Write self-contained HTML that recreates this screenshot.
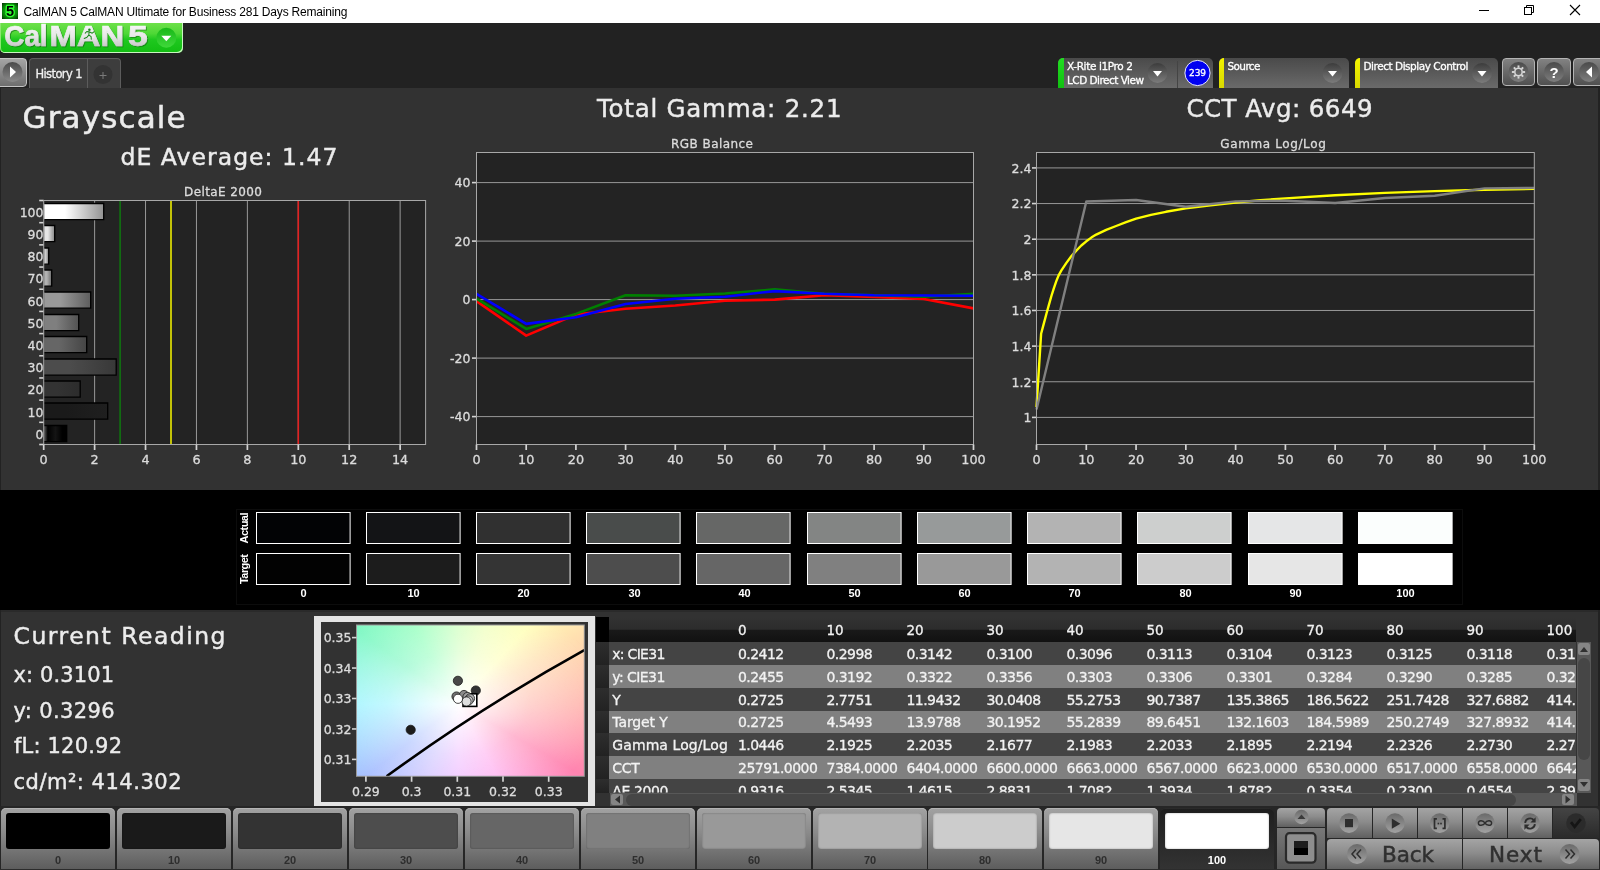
<!DOCTYPE html>
<html><head><meta charset="utf-8"><title>CalMAN 5</title>
<style>
html,body{margin:0;padding:0;}
body{width:1600px;height:870px;overflow:hidden;background:#222222;position:relative;}
.a{position:absolute;}
svg{position:absolute;left:0;top:0;will-change:transform;}
svg text{font-family:"DejaVu Sans","Liberation Sans",sans-serif;white-space:pre;}
</style></head><body>
<div class="a" style="left:0px;top:0px;width:1600px;height:23px;background:#ffffff;"></div>
<div class="a" style="left:0px;top:23px;width:183px;height:30px;background:linear-gradient(#6ee04a 0%,#4ed836 35%,#1fc81f 55%,#12bd12 100%);border-radius:0 0 5px 5px;box-shadow:inset -1px -1px 0 #c9f5c0, inset 1px 0 0 #8be870;box-sizing:border-box;"></div>
<div class="a" style="left:-2px;top:58px;width:27px;height:27px;background:linear-gradient(#a4a4a4,#6e6e6e);border:1px solid #c4c4c4;border-radius:0 4px 4px 0;"></div>
<div class="a" style="left:29px;top:58px;width:90px;height:31px;background:#3d3d3d;border:1px solid #5c5c5c;border-bottom:none;border-radius:4px 4px 0 0;"></div>
<div class="a" style="left:1058px;top:58px;width:155px;height:30px;background:linear-gradient(#4a4a4a 0%,#585858 45%,#6a6a6a 100%);border-radius:5px 5px 0 0;"></div>
<div class="a" style="left:1058px;top:58px;width:6px;height:30px;background:linear-gradient(#22dd22,#10c010);border-radius:5px 0 0 0;"></div>
<div class="a" style="left:1219px;top:58px;width:130px;height:30px;background:linear-gradient(#4a4a4a 0%,#585858 45%,#6a6a6a 100%);border-radius:5px 5px 0 0;"></div>
<div class="a" style="left:1219px;top:58px;width:5px;height:30px;background:linear-gradient(#f4f400,#d8d800);border-radius:5px 0 0 0;"></div>
<div class="a" style="left:1355px;top:58px;width:143px;height:30px;background:linear-gradient(#4a4a4a 0%,#585858 45%,#6a6a6a 100%);border-radius:5px 5px 0 0;"></div>
<div class="a" style="left:1355px;top:58px;width:5px;height:30px;background:linear-gradient(#f4f400,#d8d800);border-radius:5px 0 0 0;"></div>
<div class="a" style="left:1501.5px;top:58px;width:33.5px;height:28px;background:linear-gradient(#828282,#505050);border:1px solid #b4b4b4;border-radius:4px;box-sizing:border-box;"></div>
<div class="a" style="left:1537px;top:58px;width:33.5px;height:28px;background:linear-gradient(#828282,#505050);border:1px solid #b4b4b4;border-radius:4px;box-sizing:border-box;"></div>
<div class="a" style="left:1573px;top:58px;width:33.5px;height:28px;background:linear-gradient(#828282,#505050);border:1px solid #b4b4b4;border-radius:4px;box-sizing:border-box;"></div>
<div class="a" style="left:1px;top:88px;width:1597px;height:402px;background:#323232;"></div>
<div class="a" style="left:0px;top:490px;width:1600px;height:120px;background:#000000;"></div>
<div class="a" style="left:235.5px;top:508.5px;width:1227px;height:96px;border:1px solid #0c0c0c;box-sizing:border-box;"></div>
<div class="a" style="left:1px;top:610px;width:1597px;height:197px;background:#323232;"></div>
<div class="a" style="left:1px;top:610px;width:1597px;height:2px;background:#2a2a2a;"></div>
<div class="a" style="left:314px;top:616px;width:281px;height:189.5px;background:#e4e4e4;"></div>
<div class="a" style="left:320.5px;top:622px;width:267.7px;height:179.5px;background:#323232;"></div>
<div class="a" style="left:356.5px;top:625px;width:227.79999999999995px;height:151.29999999999995px;overflow:hidden;background:radial-gradient(ellipse 148px 106px at 101.5px 79.0px,rgba(255,255,255,1) 0%,rgba(255,255,255,0.82) 16%,rgba(255,255,255,0.42) 48%,rgba(255,255,255,0) 100%),conic-gradient(from 0deg at 101.5px 79.0px,#d4ffc4 0deg,#f0ffc0 20deg,#ffffb8 42deg,#ffe0b0 60deg,#ffb4ac 90deg,#ff84b0 120deg,#ffb0f0 152deg,#f0c0ff 180deg,#d0c4ff 204deg,#a4bcff 232deg,#98f4ff 270deg,#80f8c4 306deg,#98ffc0 330deg,#c0ffc4 350deg,#d4ffc4 360deg);"></div>
<div class="a" style="left:596px;top:617px;width:980px;height:25.2px;background:linear-gradient(#323232 0%,#2c2c2c 49%,#191919 53%,#111111 100%);"></div>
<div class="a" style="left:596px;top:617px;width:13px;height:25.2px;background:#000000;"></div>
<div class="a" style="left:609px;top:642.2px;width:967px;height:22.8px;background:#444444;"></div>
<div class="a" style="left:596px;top:642.2px;width:13px;height:22.8px;background:linear-gradient(#2e2e2e,#222222);"></div>
<div class="a" style="left:609px;top:665.0px;width:967px;height:22.8px;background:#808080;"></div>
<div class="a" style="left:596px;top:665.0px;width:13px;height:22.8px;background:linear-gradient(#2e2e2e,#222222);"></div>
<div class="a" style="left:609px;top:687.8px;width:967px;height:22.8px;background:#444444;"></div>
<div class="a" style="left:596px;top:687.8px;width:13px;height:22.8px;background:linear-gradient(#2e2e2e,#222222);"></div>
<div class="a" style="left:609px;top:710.6px;width:967px;height:22.8px;background:#808080;"></div>
<div class="a" style="left:596px;top:710.6px;width:13px;height:22.8px;background:linear-gradient(#2e2e2e,#222222);"></div>
<div class="a" style="left:609px;top:733.4px;width:967px;height:22.8px;background:#444444;"></div>
<div class="a" style="left:596px;top:733.4px;width:13px;height:22.8px;background:linear-gradient(#2e2e2e,#222222);"></div>
<div class="a" style="left:609px;top:756.2px;width:967px;height:22.8px;background:#808080;"></div>
<div class="a" style="left:596px;top:756.2px;width:13px;height:22.8px;background:linear-gradient(#2e2e2e,#222222);"></div>
<div class="a" style="left:609px;top:779.0px;width:967px;height:13.5px;background:#444444;"></div>
<div class="a" style="left:596px;top:779.0px;width:13px;height:13.5px;background:linear-gradient(#2e2e2e,#222222);"></div>
<div class="a" style="left:1577px;top:642px;width:14px;height:150.5px;background:#585858;"></div>
<div class="a" style="left:1578px;top:658px;width:12px;height:101.5px;background:#464646;border-radius:6px;"></div>
<div class="a" style="left:1578px;top:643px;width:12px;height:12px;background:#858585;border-radius:2px;"></div>
<div class="a" style="left:1578px;top:779px;width:12px;height:12px;background:#858585;border-radius:2px;"></div>
<div class="a" style="left:609.5px;top:792.5px;width:967px;height:14px;background:#585858;"></div>
<div class="a" style="left:626px;top:793.5px;width:889.5px;height:12px;background:#464646;border-radius:6px;"></div>
<div class="a" style="left:611px;top:794px;width:12px;height:11px;background:#858585;border-radius:2px;"></div>
<div class="a" style="left:1562px;top:794px;width:12px;height:11px;background:#858585;border-radius:2px;"></div>
<div class="a" style="left:0px;top:806px;width:1600px;height:64px;background:#262626;"></div>
<div class="a" style="left:1px;top:808px;width:114px;height:62px;background:linear-gradient(#a2a2a2 0%,#8a8a8a 40%,#5c5c5c 100%);border-radius:5px 5px 0 0;box-shadow:inset 0 1px 0 #b4b4b4;"></div>
<div class="a" style="left:6px;top:813px;width:104px;height:36px;background:#000000;border-radius:3px;box-shadow:inset 0 0 2px rgba(0,0,0,0.35);"></div>
<div class="a" style="left:117px;top:808px;width:114px;height:62px;background:linear-gradient(#a2a2a2 0%,#8a8a8a 40%,#5c5c5c 100%);border-radius:5px 5px 0 0;box-shadow:inset 0 1px 0 #b4b4b4;"></div>
<div class="a" style="left:122px;top:813px;width:104px;height:36px;background:#1a1a1a;border-radius:3px;box-shadow:inset 0 0 2px rgba(0,0,0,0.35);"></div>
<div class="a" style="left:233px;top:808px;width:114px;height:62px;background:linear-gradient(#a2a2a2 0%,#8a8a8a 40%,#5c5c5c 100%);border-radius:5px 5px 0 0;box-shadow:inset 0 1px 0 #b4b4b4;"></div>
<div class="a" style="left:238px;top:813px;width:104px;height:36px;background:#333333;border-radius:3px;box-shadow:inset 0 0 2px rgba(0,0,0,0.35);"></div>
<div class="a" style="left:349px;top:808px;width:114px;height:62px;background:linear-gradient(#a2a2a2 0%,#8a8a8a 40%,#5c5c5c 100%);border-radius:5px 5px 0 0;box-shadow:inset 0 1px 0 #b4b4b4;"></div>
<div class="a" style="left:354px;top:813px;width:104px;height:36px;background:#4d4d4d;border-radius:3px;box-shadow:inset 0 0 2px rgba(0,0,0,0.35);"></div>
<div class="a" style="left:465px;top:808px;width:114px;height:62px;background:linear-gradient(#a2a2a2 0%,#8a8a8a 40%,#5c5c5c 100%);border-radius:5px 5px 0 0;box-shadow:inset 0 1px 0 #b4b4b4;"></div>
<div class="a" style="left:470px;top:813px;width:104px;height:36px;background:#666666;border-radius:3px;box-shadow:inset 0 0 2px rgba(0,0,0,0.35);"></div>
<div class="a" style="left:581px;top:808px;width:114px;height:62px;background:linear-gradient(#a2a2a2 0%,#8a8a8a 40%,#5c5c5c 100%);border-radius:5px 5px 0 0;box-shadow:inset 0 1px 0 #b4b4b4;"></div>
<div class="a" style="left:586px;top:813px;width:104px;height:36px;background:#808080;border-radius:3px;box-shadow:inset 0 0 2px rgba(0,0,0,0.35);"></div>
<div class="a" style="left:697px;top:808px;width:114px;height:62px;background:linear-gradient(#a2a2a2 0%,#8a8a8a 40%,#5c5c5c 100%);border-radius:5px 5px 0 0;box-shadow:inset 0 1px 0 #b4b4b4;"></div>
<div class="a" style="left:702px;top:813px;width:104px;height:36px;background:#999999;border-radius:3px;box-shadow:inset 0 0 2px rgba(0,0,0,0.35);"></div>
<div class="a" style="left:813px;top:808px;width:114px;height:62px;background:linear-gradient(#a2a2a2 0%,#8a8a8a 40%,#5c5c5c 100%);border-radius:5px 5px 0 0;box-shadow:inset 0 1px 0 #b4b4b4;"></div>
<div class="a" style="left:818px;top:813px;width:104px;height:36px;background:#b3b3b3;border-radius:3px;box-shadow:inset 0 0 2px rgba(0,0,0,0.35);"></div>
<div class="a" style="left:928px;top:808px;width:114px;height:62px;background:linear-gradient(#a2a2a2 0%,#8a8a8a 40%,#5c5c5c 100%);border-radius:5px 5px 0 0;box-shadow:inset 0 1px 0 #b4b4b4;"></div>
<div class="a" style="left:933px;top:813px;width:104px;height:36px;background:#cccccc;border-radius:3px;box-shadow:inset 0 0 2px rgba(0,0,0,0.35);"></div>
<div class="a" style="left:1044px;top:808px;width:114px;height:62px;background:linear-gradient(#a2a2a2 0%,#8a8a8a 40%,#5c5c5c 100%);border-radius:5px 5px 0 0;box-shadow:inset 0 1px 0 #b4b4b4;"></div>
<div class="a" style="left:1049px;top:813px;width:104px;height:36px;background:#e6e6e6;border-radius:3px;box-shadow:inset 0 0 2px rgba(0,0,0,0.35);"></div>
<div class="a" style="left:1160px;top:808px;width:114px;height:62px;background:linear-gradient(#1e1e1e,#333333);border-radius:5px 5px 0 0;box-shadow:inset 0 1px 0 #2a2a2a;"></div>
<div class="a" style="left:1165px;top:813px;width:104px;height:36px;background:#ffffff;border-radius:3px;box-shadow:inset 0 0 2px rgba(0,0,0,0.35);"></div>
<div class="a" style="left:1277px;top:808px;width:48px;height:18.5px;background:linear-gradient(#a4a4a4 0%,#8c8c8c 45%,#606060 100%);border-radius:4px 4px 0 0;"></div>
<div class="a" style="left:1277px;top:827.5px;width:48px;height:42.5px;background:linear-gradient(#787878,#565656);"></div>
<div class="a" style="left:1327px;top:808px;width:44.5px;height:30px;background:linear-gradient(#a4a4a4 0%,#8c8c8c 45%,#606060 100%);border-radius:4px 0 0 0;"></div>
<div class="a" style="left:1372.5px;top:808px;width:44.0px;height:30px;background:linear-gradient(#a4a4a4 0%,#8c8c8c 45%,#606060 100%);"></div>
<div class="a" style="left:1417.5px;top:808px;width:44.0px;height:30px;background:linear-gradient(#a4a4a4 0%,#8c8c8c 45%,#606060 100%);"></div>
<div class="a" style="left:1462.5px;top:808px;width:44.0px;height:30px;background:linear-gradient(#a4a4a4 0%,#8c8c8c 45%,#606060 100%);"></div>
<div class="a" style="left:1507.5px;top:808px;width:44.0px;height:30px;background:linear-gradient(#a4a4a4 0%,#8c8c8c 45%,#606060 100%);"></div>
<div class="a" style="left:1552.5px;top:808px;width:46.2px;height:30px;background:linear-gradient(#444444,#2a2a2a);border-radius:0 4px 0 0;"></div>
<div class="a" style="left:1327px;top:839px;width:135px;height:31px;background:linear-gradient(#a4a4a4 0%,#8c8c8c 45%,#606060 100%);border-radius:4px 0 0 0;"></div>
<div class="a" style="left:1463px;top:839px;width:135.5px;height:31px;background:linear-gradient(#a4a4a4 0%,#8c8c8c 45%,#606060 100%);border-radius:0 4px 0 0;"></div>
<div class="a" style="left:0px;top:869px;width:1600px;height:1px;background:#2c2c2c;"></div>
<svg width="1600" height="870" viewBox="0 0 1600 870">
<defs><radialGradient id="icg" cx="50%" cy="50%" r="72%"><stop offset="0" stop-color="#18c818"/><stop offset="0.6" stop-color="#0a8a0a"/><stop offset="1" stop-color="#032803"/></radialGradient></defs>
<rect x="2" y="3" width="16" height="16" fill="url(#icg)"/>
<text x="10.0" y="16.1" font-size="14.5" fill="#000000" text-anchor="middle" font-weight="bold" style="font-family:Liberation Sans, sans-serif" stroke="#30ff30" stroke-width="2.6" stroke-linejoin="round" paint-order="stroke">5</text>
<text x="23.5" y="16.0" font-size="12" fill="#000000" style="font-family:Liberation Sans, sans-serif" textLength="324.0" lengthAdjust="spacing">CalMAN 5 CalMAN Ultimate for Business 281 Days Remaining</text>
<line x1="1479" y1="10.5" x2="1489" y2="10.5" stroke="#000" stroke-width="1"/>
<rect x="1524.5" y="7.5" width="7" height="7" fill="none" stroke="#000" stroke-width="1"/>
<path d="M1526.5 7.5V5.5H1533.5V12.5H1531.5" fill="none" stroke="#000" stroke-width="1"/>
<path d="M1570 5L1580 15M1580 5L1570 15" fill="none" stroke="#000" stroke-width="1.1"/>
<defs><linearGradient id="lg" x1="0" y1="0" x2="0" y2="1"><stop offset="0" stop-color="#ffffff"/><stop offset="0.55" stop-color="#e6e6e6"/><stop offset="1" stop-color="#b8b8b8"/></linearGradient></defs>
<defs><filter id="ls" x="-5%" y="-10%" width="112%" height="130%"><feDropShadow dx="1" dy="1" stdDeviation="0.35" flood-color="#167016" flood-opacity="0.65"/></filter></defs>
<text y="45.7" font-size="29.3" font-weight="bold" fill="url(#lg)" style="font-family:Liberation Sans, sans-serif" stroke="url(#lg)" stroke-width="0.7" filter="url(#ls)"><tspan x="4.3" textLength="43.3" lengthAdjust="spacingAndGlyphs">Cal</tspan><tspan x="49.6" textLength="74.5" lengthAdjust="spacingAndGlyphs">MAN</tspan><tspan x="128" textLength="19.7" lengthAdjust="spacingAndGlyphs">5</tspan></text>
<path d="M89.6 28.5L85 38h9.2z" fill="#ececec"/>
<circle cx="89.4" cy="29.8" r="1.25" fill="#1d8a1d"/>
<path d="M85.2 33.2l1.6-1.7 2.4 0.3 3 1.4 1.7-1.4M89.1 31.8l-0.3 3.3-1.8 2.1-2.8 1.2M88.8 35l2.3 1.6 0.2 2.7" fill="none" stroke="#1d8a1d" stroke-width="1.05" stroke-linecap="round" stroke-linejoin="round"/>
<defs><linearGradient id="gcirc" x1="0" y1="0" x2="0" y2="1"><stop offset="0" stop-color="#18b818"/><stop offset="1" stop-color="#3fd83a"/></linearGradient></defs>
<circle cx="166.3" cy="37.7" r="10" fill="url(#gcirc)"/>
<path d="M161.3 35.7h10l-5 5.5z" fill="#ffffff"/>
<defs><linearGradient id="dcirc" x1="0" y1="0" x2="0" y2="1"><stop offset="0" stop-color="#4a4a4a"/><stop offset="1" stop-color="#8a8a8a"/></linearGradient></defs>
<circle cx="12.5" cy="72" r="10" fill="url(#dcirc)"/>
<path d="M10 66.5v11l6-5.5z" fill="#ffffff"/>
<line x1="87.5" y1="59" x2="87.5" y2="88" stroke="#5c5c5c" stroke-width="1"/>
<text x="35.5" y="78.0" font-size="11.5" fill="#f0f0f0" textLength="47.0" lengthAdjust="spacing" stroke="#f0f0f0" stroke-width="0.3">History 1</text>
<circle cx="103" cy="74.5" r="9.5" fill="#333333"/>
<path d="M99.5 75.5h7M103 72v7" stroke="#7a7a7a" stroke-width="1" fill="none"/>
<defs><linearGradient id="dcirc2" x1="0" y1="0" x2="0" y2="1"><stop offset="0" stop-color="#3c3c3c"/><stop offset="1" stop-color="#7c7c7c"/></linearGradient></defs>
<text x="1067.0" y="70.0" font-size="10.5" fill="#ffffff" textLength="66.0" lengthAdjust="spacing" stroke="#ffffff" stroke-width="0.3">X-Rite i1Pro 2</text>
<text x="1067.0" y="84.0" font-size="10.5" fill="#ffffff" textLength="77.0" lengthAdjust="spacing" stroke="#ffffff" stroke-width="0.3">LCD Direct View</text>
<circle cx="1157.5" cy="73" r="10" fill="url(#dcirc2)"/>
<path d="M1153.0 71h9l-4.5 5.5z" fill="#ffffff"/>
<line x1="1177.5" y1="61" x2="1177.5" y2="88" stroke="#444444" stroke-width="1"/>
<circle cx="1197.5" cy="73" r="12.6" fill="#0000f0" stroke="#e8e8ff" stroke-width="1"/>
<text x="1197.5" y="76.3" font-size="9" fill="#ffffff" text-anchor="middle" stroke="#ffffff" stroke-width="0.3">239</text>
<text x="1227.5" y="70.0" font-size="10.5" fill="#ffffff" textLength="33.0" lengthAdjust="spacing" stroke="#ffffff" stroke-width="0.3">Source</text>
<circle cx="1332.5" cy="73" r="10" fill="url(#dcirc2)"/>
<path d="M1328.0 71h9l-4.5 5.5z" fill="#ffffff"/>
<text x="1363.5" y="70.0" font-size="10.5" fill="#ffffff" textLength="105.0" lengthAdjust="spacing" stroke="#ffffff" stroke-width="0.3">Direct Display Control</text>
<circle cx="1482" cy="73" r="10" fill="url(#dcirc2)"/>
<path d="M1477.5 71h9l-4.5 5.5z" fill="#ffffff"/>
<circle cx="1518.5" cy="72" r="10" fill="url(#dcirc3)"/>
<circle cx="1554" cy="72" r="10" fill="url(#dcirc3)"/>
<circle cx="1589" cy="72" r="10" fill="url(#dcirc3)"/>
<defs><linearGradient id="dcirc3" x1="0" y1="0" x2="0" y2="1"><stop offset="0" stop-color="#4a4a4a"/><stop offset="1" stop-color="#7e7e7e"/></linearGradient></defs>
<line x1="1522.80" y1="72.00" x2="1525.10" y2="72.00" stroke="#d8d8d8" stroke-width="1.9"/><line x1="1521.54" y1="75.04" x2="1523.17" y2="76.67" stroke="#d8d8d8" stroke-width="1.9"/><line x1="1518.50" y1="76.30" x2="1518.50" y2="78.60" stroke="#d8d8d8" stroke-width="1.9"/><line x1="1515.46" y1="75.04" x2="1513.83" y2="76.67" stroke="#d8d8d8" stroke-width="1.9"/><line x1="1514.20" y1="72.00" x2="1511.90" y2="72.00" stroke="#d8d8d8" stroke-width="1.9"/><line x1="1515.46" y1="68.96" x2="1513.83" y2="67.33" stroke="#d8d8d8" stroke-width="1.9"/><line x1="1518.50" y1="67.70" x2="1518.50" y2="65.40" stroke="#d8d8d8" stroke-width="1.9"/><line x1="1521.54" y1="68.96" x2="1523.17" y2="67.33" stroke="#d8d8d8" stroke-width="1.9"/>
<circle cx="1518.5" cy="72" r="3.7" fill="none" stroke="#d8d8d8" stroke-width="1.5"/>
<text x="1554.0" y="77.5" font-size="15" fill="#ffffff" text-anchor="middle" font-weight="bold" style="font-family:Liberation Sans, sans-serif">?</text>
<path d="M1592 66.5v11l-6-5.5z" fill="#ffffff"/>
<text x="22.6" y="127.7" font-size="31" fill="#ececec" textLength="163.0" lengthAdjust="spacing" stroke="#ececec" stroke-width="0.55">Grayscale</text>
<text x="120.5" y="164.7" font-size="23.5" fill="#ececec" textLength="217.0" lengthAdjust="spacing" stroke="#ececec" stroke-width="0.45">dE Average: 1.47</text>
<text x="597.0" y="116.6" font-size="24.5" fill="#ececec" textLength="244.5" lengthAdjust="spacing" stroke="#ececec" stroke-width="0.45">Total Gamma: 2.21</text>
<text x="1186.5" y="116.6" font-size="24.5" fill="#ececec" textLength="186.0" lengthAdjust="spacing" stroke="#ececec" stroke-width="0.45">CCT Avg: 6649</text>
<text x="223.0" y="195.6" font-size="12" fill="#dcdcdc" text-anchor="middle" textLength="78.0" lengthAdjust="spacing" stroke="#dcdcdc" stroke-width="0.3">DeltaE 2000</text>
<rect x="43.7" y="200.5" width="381.90000000000003" height="244.0" fill="#232323"/>
<line x1="94.62" y1="200.5" x2="94.62" y2="444.5" stroke="#989898" stroke-width="1"/>
<line x1="145.54000000000002" y1="200.5" x2="145.54000000000002" y2="444.5" stroke="#989898" stroke-width="1"/>
<line x1="196.45999999999998" y1="200.5" x2="196.45999999999998" y2="444.5" stroke="#989898" stroke-width="1"/>
<line x1="247.38" y1="200.5" x2="247.38" y2="444.5" stroke="#989898" stroke-width="1"/>
<line x1="298.3" y1="200.5" x2="298.3" y2="444.5" stroke="#989898" stroke-width="1"/>
<line x1="349.21999999999997" y1="200.5" x2="349.21999999999997" y2="444.5" stroke="#989898" stroke-width="1"/>
<line x1="400.14" y1="200.5" x2="400.14" y2="444.5" stroke="#989898" stroke-width="1"/>
<line x1="120.08" y1="200.5" x2="120.08" y2="444.5" stroke="#0a8a0a" stroke-width="1.25"/>
<line x1="171.0" y1="200.5" x2="171.0" y2="444.5" stroke="#f8f800" stroke-width="1.5"/>
<line x1="298.3" y1="200.5" x2="298.3" y2="444.5" stroke="#e42020" stroke-width="1.6"/>
<rect x="44.2" y="425.5" width="22.5" height="16.2" fill="url(#bg0)"/>
<path d="M44.2 425.5H66.7V441.7H44.2" fill="none" stroke="#000000" stroke-width="1.3"/>
<line x1="39.2" y1="422.3181818181818" x2="43.7" y2="422.3181818181818" stroke="#d4d4d4" stroke-width="1.6"/>
<text x="43.5" y="438.7" font-size="12.5" fill="#dcdcdc" text-anchor="end" stroke="#dcdcdc" stroke-width="0.3">0</text>
<rect x="44.2" y="403.0" width="63.5" height="16.2" fill="url(#bg1)"/>
<path d="M44.2 403.0H107.7V419.2H44.2" fill="none" stroke="#000000" stroke-width="1.3"/>
<line x1="39.2" y1="400.1363636363636" x2="43.7" y2="400.1363636363636" stroke="#d4d4d4" stroke-width="1.6"/>
<text x="43.5" y="416.5" font-size="12.5" fill="#dcdcdc" text-anchor="end" stroke="#dcdcdc" stroke-width="0.3">10</text>
<rect x="44.2" y="381.0" width="36.0" height="16.2" fill="url(#bg2)"/>
<path d="M44.2 381.0H80.2V397.2H44.2" fill="none" stroke="#000000" stroke-width="1.3"/>
<line x1="39.2" y1="377.95454545454544" x2="43.7" y2="377.95454545454544" stroke="#d4d4d4" stroke-width="1.6"/>
<text x="43.5" y="394.3" font-size="12.5" fill="#dcdcdc" text-anchor="end" stroke="#dcdcdc" stroke-width="0.3">20</text>
<rect x="44.2" y="359.0" width="72.0" height="16.2" fill="url(#bg3)"/>
<path d="M44.2 359.0H116.2V375.2H44.2" fill="none" stroke="#000000" stroke-width="1.3"/>
<line x1="39.2" y1="355.77272727272725" x2="43.7" y2="355.77272727272725" stroke="#d4d4d4" stroke-width="1.6"/>
<text x="43.5" y="372.2" font-size="12.5" fill="#dcdcdc" text-anchor="end" stroke="#dcdcdc" stroke-width="0.3">30</text>
<rect x="44.2" y="336.5" width="42.5" height="16.2" fill="url(#bg4)"/>
<path d="M44.2 336.5H86.7V352.7H44.2" fill="none" stroke="#000000" stroke-width="1.3"/>
<line x1="39.2" y1="333.59090909090907" x2="43.7" y2="333.59090909090907" stroke="#d4d4d4" stroke-width="1.6"/>
<text x="43.5" y="350.0" font-size="12.5" fill="#dcdcdc" text-anchor="end" stroke="#dcdcdc" stroke-width="0.3">40</text>
<rect x="44.2" y="314.5" width="34.5" height="16.2" fill="url(#bg5)"/>
<path d="M44.2 314.5H78.7V330.7H44.2" fill="none" stroke="#000000" stroke-width="1.3"/>
<line x1="39.2" y1="311.4090909090909" x2="43.7" y2="311.4090909090909" stroke="#d4d4d4" stroke-width="1.6"/>
<text x="43.5" y="327.8" font-size="12.5" fill="#dcdcdc" text-anchor="end" stroke="#dcdcdc" stroke-width="0.3">50</text>
<rect x="44.2" y="292.0" width="46.5" height="16.2" fill="url(#bg6)"/>
<path d="M44.2 292.0H90.7V308.2H44.2" fill="none" stroke="#000000" stroke-width="1.3"/>
<line x1="39.2" y1="289.22727272727275" x2="43.7" y2="289.22727272727275" stroke="#d4d4d4" stroke-width="1.6"/>
<text x="43.5" y="305.6" font-size="12.5" fill="#dcdcdc" text-anchor="end" stroke="#dcdcdc" stroke-width="0.3">60</text>
<rect x="44.2" y="270.0" width="7.5" height="16.2" fill="url(#bg7)"/>
<path d="M44.2 270.0H51.7V286.2H44.2" fill="none" stroke="#000000" stroke-width="1.3"/>
<line x1="39.2" y1="267.0454545454545" x2="43.7" y2="267.0454545454545" stroke="#d4d4d4" stroke-width="1.6"/>
<text x="43.5" y="283.4" font-size="12.5" fill="#dcdcdc" text-anchor="end" stroke="#dcdcdc" stroke-width="0.3">70</text>
<rect x="44.2" y="248.0" width="4.5" height="16.2" fill="url(#bg8)"/>
<path d="M44.2 248.0H48.7V264.2H44.2" fill="none" stroke="#000000" stroke-width="1.3"/>
<line x1="39.2" y1="244.86363636363635" x2="43.7" y2="244.86363636363635" stroke="#d4d4d4" stroke-width="1.6"/>
<text x="43.5" y="261.3" font-size="12.5" fill="#dcdcdc" text-anchor="end" stroke="#dcdcdc" stroke-width="0.3">80</text>
<rect x="44.2" y="225.5" width="10.5" height="16.2" fill="url(#bg9)"/>
<path d="M44.2 225.5H54.7V241.7H44.2" fill="none" stroke="#000000" stroke-width="1.3"/>
<line x1="39.2" y1="222.68181818181816" x2="43.7" y2="222.68181818181816" stroke="#d4d4d4" stroke-width="1.6"/>
<text x="43.5" y="239.1" font-size="12.5" fill="#dcdcdc" text-anchor="end" stroke="#dcdcdc" stroke-width="0.3">90</text>
<rect x="44.2" y="203.5" width="59.5" height="16.2" fill="url(#bg10)"/>
<path d="M44.2 203.5H103.7V219.7H44.2" fill="none" stroke="#000000" stroke-width="1.3"/>
<line x1="39.2" y1="200.49999999999997" x2="43.7" y2="200.49999999999997" stroke="#d4d4d4" stroke-width="1.6"/>
<text x="43.5" y="216.9" font-size="12.5" fill="#dcdcdc" text-anchor="end" stroke="#dcdcdc" stroke-width="0.3">100</text>
<defs><linearGradient id="bg0" x1="0" y1="0" x2="1" y2="0"><stop offset="0" stop-color="#5a5a5a"/><stop offset="0.16" stop-color="#000000"/><stop offset="0.5" stop-color="#141414"/><stop offset="0.8" stop-color="#000000"/></linearGradient><linearGradient id="bg1" x1="0" y1="0" x2="1" y2="0"><stop offset="0" stop-color="#1a1a1a"/><stop offset="0.35" stop-color="#1a1a1a"/><stop offset="1" stop-color="#1f1f1f"/></linearGradient><linearGradient id="bg2" x1="0" y1="0" x2="1" y2="0"><stop offset="0" stop-color="#333333"/><stop offset="0.35" stop-color="#333333"/><stop offset="1" stop-color="#2c2c2c"/></linearGradient><linearGradient id="bg3" x1="0" y1="0" x2="1" y2="0"><stop offset="0" stop-color="#4c4c4c"/><stop offset="0.35" stop-color="#4c4c4c"/><stop offset="1" stop-color="#383838"/></linearGradient><linearGradient id="bg4" x1="0" y1="0" x2="1" y2="0"><stop offset="0" stop-color="#666666"/><stop offset="0.35" stop-color="#666666"/><stop offset="1" stop-color="#454545"/></linearGradient><linearGradient id="bg5" x1="0" y1="0" x2="1" y2="0"><stop offset="0" stop-color="#7f7f7f"/><stop offset="0.35" stop-color="#7f7f7f"/><stop offset="1" stop-color="#525252"/></linearGradient><linearGradient id="bg6" x1="0" y1="0" x2="1" y2="0"><stop offset="0" stop-color="#999999"/><stop offset="0.35" stop-color="#999999"/><stop offset="1" stop-color="#5e5e5e"/></linearGradient><linearGradient id="bg7" x1="0" y1="0" x2="1" y2="0"><stop offset="0" stop-color="#b2b2b2"/><stop offset="0.35" stop-color="#b2b2b2"/><stop offset="1" stop-color="#6b6b6b"/></linearGradient><linearGradient id="bg8" x1="0" y1="0" x2="1" y2="0"><stop offset="0" stop-color="#cccccc"/><stop offset="0.35" stop-color="#cccccc"/><stop offset="1" stop-color="#787878"/></linearGradient><linearGradient id="bg9" x1="0" y1="0" x2="1" y2="0"><stop offset="0" stop-color="#e5e5e5"/><stop offset="0.35" stop-color="#e5e5e5"/><stop offset="1" stop-color="#858585"/></linearGradient><linearGradient id="bg10" x1="0" y1="0" x2="1" y2="0"><stop offset="0" stop-color="#ffffff"/><stop offset="0.35" stop-color="#ffffff"/><stop offset="1" stop-color="#929292"/></linearGradient></defs>
<line x1="39.2" y1="444.5" x2="43.7" y2="444.5" stroke="#d4d4d4" stroke-width="1.6"/>
<rect x="43.7" y="200.5" width="381.90000000000003" height="244.0" fill="none" stroke="#a8a8a8" stroke-width="1"/>
<line x1="43.7" y1="444.5" x2="43.7" y2="450.0" stroke="#d4d4d4" stroke-width="1.7"/>
<text x="43.7" y="464.2" font-size="12.8" fill="#dcdcdc" text-anchor="middle" stroke="#dcdcdc" stroke-width="0.3">0</text>
<line x1="94.62" y1="444.5" x2="94.62" y2="450.0" stroke="#d4d4d4" stroke-width="1.7"/>
<text x="94.6" y="464.2" font-size="12.8" fill="#dcdcdc" text-anchor="middle" stroke="#dcdcdc" stroke-width="0.3">2</text>
<line x1="145.54000000000002" y1="444.5" x2="145.54000000000002" y2="450.0" stroke="#d4d4d4" stroke-width="1.7"/>
<text x="145.5" y="464.2" font-size="12.8" fill="#dcdcdc" text-anchor="middle" stroke="#dcdcdc" stroke-width="0.3">4</text>
<line x1="196.45999999999998" y1="444.5" x2="196.45999999999998" y2="450.0" stroke="#d4d4d4" stroke-width="1.7"/>
<text x="196.5" y="464.2" font-size="12.8" fill="#dcdcdc" text-anchor="middle" stroke="#dcdcdc" stroke-width="0.3">6</text>
<line x1="247.38" y1="444.5" x2="247.38" y2="450.0" stroke="#d4d4d4" stroke-width="1.7"/>
<text x="247.4" y="464.2" font-size="12.8" fill="#dcdcdc" text-anchor="middle" stroke="#dcdcdc" stroke-width="0.3">8</text>
<line x1="298.3" y1="444.5" x2="298.3" y2="450.0" stroke="#d4d4d4" stroke-width="1.7"/>
<text x="298.3" y="464.2" font-size="12.8" fill="#dcdcdc" text-anchor="middle" stroke="#dcdcdc" stroke-width="0.3">10</text>
<line x1="349.21999999999997" y1="444.5" x2="349.21999999999997" y2="450.0" stroke="#d4d4d4" stroke-width="1.7"/>
<text x="349.2" y="464.2" font-size="12.8" fill="#dcdcdc" text-anchor="middle" stroke="#dcdcdc" stroke-width="0.3">12</text>
<line x1="400.14" y1="444.5" x2="400.14" y2="450.0" stroke="#d4d4d4" stroke-width="1.7"/>
<text x="400.1" y="464.2" font-size="12.8" fill="#dcdcdc" text-anchor="middle" stroke="#dcdcdc" stroke-width="0.3">14</text>
<text x="712.0" y="147.8" font-size="12" fill="#dcdcdc" text-anchor="middle" textLength="82.0" lengthAdjust="spacing" stroke="#dcdcdc" stroke-width="0.3">RGB Balance</text>
<rect x="476.5" y="152.5" width="497.0" height="292.0" fill="#232323"/>
<line x1="476.5" y1="182.60000000000002" x2="973.5" y2="182.60000000000002" stroke="#989898" stroke-width="1"/>
<line x1="472.0" y1="182.60000000000002" x2="476.5" y2="182.60000000000002" stroke="#d4d4d4" stroke-width="1.6"/>
<text x="470.5" y="187.4" font-size="12.5" fill="#dcdcdc" text-anchor="end" stroke="#dcdcdc" stroke-width="0.3">40</text>
<line x1="476.5" y1="241.10000000000002" x2="973.5" y2="241.10000000000002" stroke="#989898" stroke-width="1"/>
<line x1="472.0" y1="241.10000000000002" x2="476.5" y2="241.10000000000002" stroke="#d4d4d4" stroke-width="1.6"/>
<text x="470.5" y="245.9" font-size="12.5" fill="#dcdcdc" text-anchor="end" stroke="#dcdcdc" stroke-width="0.3">20</text>
<line x1="476.5" y1="299.6" x2="973.5" y2="299.6" stroke="#989898" stroke-width="1"/>
<line x1="472.0" y1="299.6" x2="476.5" y2="299.6" stroke="#d4d4d4" stroke-width="1.6"/>
<text x="470.5" y="304.4" font-size="12.5" fill="#dcdcdc" text-anchor="end" stroke="#dcdcdc" stroke-width="0.3">0</text>
<line x1="476.5" y1="358.1" x2="973.5" y2="358.1" stroke="#989898" stroke-width="1"/>
<line x1="472.0" y1="358.1" x2="476.5" y2="358.1" stroke="#d4d4d4" stroke-width="1.6"/>
<text x="470.5" y="362.9" font-size="12.5" fill="#dcdcdc" text-anchor="end" stroke="#dcdcdc" stroke-width="0.3">-20</text>
<line x1="476.5" y1="416.6" x2="973.5" y2="416.6" stroke="#989898" stroke-width="1"/>
<line x1="472.0" y1="416.6" x2="476.5" y2="416.6" stroke="#d4d4d4" stroke-width="1.6"/>
<text x="470.5" y="421.4" font-size="12.5" fill="#dcdcdc" text-anchor="end" stroke="#dcdcdc" stroke-width="0.3">-40</text>
<polyline points="476.5,301.1 526.2,335.6 575.9,314.5 625.6,308.7 675.3,305.5 725.0,300.8 774.7,299.6 824.4,295.2 874.1,297.0 923.8,299.0 973.5,308.4" fill="none" stroke="#ff0000" stroke-width="2.6" stroke-linejoin="round"/>
<polyline points="476.5,298.7 526.2,328.9 575.9,313.9 625.6,295.2 675.3,295.8 725.0,293.5 774.7,289.4 824.4,293.8 874.1,295.2 923.8,296.7 973.5,293.8" fill="none" stroke="#008000" stroke-width="2.6" stroke-linejoin="round"/>
<polyline points="476.5,293.8 526.2,323.9 575.9,317.2 625.6,304.0 675.3,298.7 725.0,296.7 774.7,291.1 824.4,293.8 874.1,295.2 923.8,295.5 973.5,295.8" fill="none" stroke="#0000ff" stroke-width="2.6" stroke-linejoin="round"/>
<rect x="476.5" y="152.5" width="497.0" height="292.0" fill="none" stroke="#a8a8a8" stroke-width="1"/>
<line x1="476.5" y1="444.5" x2="476.5" y2="450.0" stroke="#d4d4d4" stroke-width="1.7"/>
<text x="476.5" y="464.2" font-size="12.8" fill="#dcdcdc" text-anchor="middle" stroke="#dcdcdc" stroke-width="0.3">0</text>
<line x1="526.2" y1="444.5" x2="526.2" y2="450.0" stroke="#d4d4d4" stroke-width="1.7"/>
<text x="526.2" y="464.2" font-size="12.8" fill="#dcdcdc" text-anchor="middle" stroke="#dcdcdc" stroke-width="0.3">10</text>
<line x1="575.9" y1="444.5" x2="575.9" y2="450.0" stroke="#d4d4d4" stroke-width="1.7"/>
<text x="575.9" y="464.2" font-size="12.8" fill="#dcdcdc" text-anchor="middle" stroke="#dcdcdc" stroke-width="0.3">20</text>
<line x1="625.6" y1="444.5" x2="625.6" y2="450.0" stroke="#d4d4d4" stroke-width="1.7"/>
<text x="625.6" y="464.2" font-size="12.8" fill="#dcdcdc" text-anchor="middle" stroke="#dcdcdc" stroke-width="0.3">30</text>
<line x1="675.3" y1="444.5" x2="675.3" y2="450.0" stroke="#d4d4d4" stroke-width="1.7"/>
<text x="675.3" y="464.2" font-size="12.8" fill="#dcdcdc" text-anchor="middle" stroke="#dcdcdc" stroke-width="0.3">40</text>
<line x1="725.0" y1="444.5" x2="725.0" y2="450.0" stroke="#d4d4d4" stroke-width="1.7"/>
<text x="725.0" y="464.2" font-size="12.8" fill="#dcdcdc" text-anchor="middle" stroke="#dcdcdc" stroke-width="0.3">50</text>
<line x1="774.7" y1="444.5" x2="774.7" y2="450.0" stroke="#d4d4d4" stroke-width="1.7"/>
<text x="774.7" y="464.2" font-size="12.8" fill="#dcdcdc" text-anchor="middle" stroke="#dcdcdc" stroke-width="0.3">60</text>
<line x1="824.4" y1="444.5" x2="824.4" y2="450.0" stroke="#d4d4d4" stroke-width="1.7"/>
<text x="824.4" y="464.2" font-size="12.8" fill="#dcdcdc" text-anchor="middle" stroke="#dcdcdc" stroke-width="0.3">70</text>
<line x1="874.0999999999999" y1="444.5" x2="874.0999999999999" y2="450.0" stroke="#d4d4d4" stroke-width="1.7"/>
<text x="874.1" y="464.2" font-size="12.8" fill="#dcdcdc" text-anchor="middle" stroke="#dcdcdc" stroke-width="0.3">80</text>
<line x1="923.8" y1="444.5" x2="923.8" y2="450.0" stroke="#d4d4d4" stroke-width="1.7"/>
<text x="923.8" y="464.2" font-size="12.8" fill="#dcdcdc" text-anchor="middle" stroke="#dcdcdc" stroke-width="0.3">90</text>
<line x1="973.5" y1="444.5" x2="973.5" y2="450.0" stroke="#d4d4d4" stroke-width="1.7"/>
<text x="973.5" y="464.2" font-size="12.8" fill="#dcdcdc" text-anchor="middle" stroke="#dcdcdc" stroke-width="0.3">100</text>
<text x="1273.0" y="147.8" font-size="12" fill="#dcdcdc" text-anchor="middle" textLength="105.5" lengthAdjust="spacing" stroke="#dcdcdc" stroke-width="0.3">Gamma Log/Log</text>
<rect x="1036.5" y="152.5" width="497.79999999999995" height="292.0" fill="#232323"/>
<line x1="1036.5" y1="417.4" x2="1534.3" y2="417.4" stroke="#989898" stroke-width="1"/>
<line x1="1032.0" y1="417.4" x2="1036.5" y2="417.4" stroke="#d4d4d4" stroke-width="1.6"/>
<text x="1031.5" y="422.2" font-size="12.5" fill="#dcdcdc" text-anchor="end" stroke="#dcdcdc" stroke-width="0.3">1</text>
<line x1="1036.5" y1="381.76" x2="1534.3" y2="381.76" stroke="#989898" stroke-width="1"/>
<line x1="1032.0" y1="381.76" x2="1036.5" y2="381.76" stroke="#d4d4d4" stroke-width="1.6"/>
<text x="1031.5" y="386.6" font-size="12.5" fill="#dcdcdc" text-anchor="end" stroke="#dcdcdc" stroke-width="0.3">1.2</text>
<line x1="1036.5" y1="346.12" x2="1534.3" y2="346.12" stroke="#989898" stroke-width="1"/>
<line x1="1032.0" y1="346.12" x2="1036.5" y2="346.12" stroke="#d4d4d4" stroke-width="1.6"/>
<text x="1031.5" y="350.9" font-size="12.5" fill="#dcdcdc" text-anchor="end" stroke="#dcdcdc" stroke-width="0.3">1.4</text>
<line x1="1036.5" y1="310.47999999999996" x2="1534.3" y2="310.47999999999996" stroke="#989898" stroke-width="1"/>
<line x1="1032.0" y1="310.47999999999996" x2="1036.5" y2="310.47999999999996" stroke="#d4d4d4" stroke-width="1.6"/>
<text x="1031.5" y="315.3" font-size="12.5" fill="#dcdcdc" text-anchor="end" stroke="#dcdcdc" stroke-width="0.3">1.6</text>
<line x1="1036.5" y1="274.84" x2="1534.3" y2="274.84" stroke="#989898" stroke-width="1"/>
<line x1="1032.0" y1="274.84" x2="1036.5" y2="274.84" stroke="#d4d4d4" stroke-width="1.6"/>
<text x="1031.5" y="279.6" font-size="12.5" fill="#dcdcdc" text-anchor="end" stroke="#dcdcdc" stroke-width="0.3">1.8</text>
<line x1="1036.5" y1="239.2" x2="1534.3" y2="239.2" stroke="#989898" stroke-width="1"/>
<line x1="1032.0" y1="239.2" x2="1036.5" y2="239.2" stroke="#d4d4d4" stroke-width="1.6"/>
<text x="1031.5" y="244.0" font-size="12.5" fill="#dcdcdc" text-anchor="end" stroke="#dcdcdc" stroke-width="0.3">2</text>
<line x1="1036.5" y1="203.55999999999995" x2="1534.3" y2="203.55999999999995" stroke="#989898" stroke-width="1"/>
<line x1="1032.0" y1="203.55999999999995" x2="1036.5" y2="203.55999999999995" stroke="#d4d4d4" stroke-width="1.6"/>
<text x="1031.5" y="208.4" font-size="12.5" fill="#dcdcdc" text-anchor="end" stroke="#dcdcdc" stroke-width="0.3">2.2</text>
<line x1="1036.5" y1="167.91999999999993" x2="1534.3" y2="167.91999999999993" stroke="#989898" stroke-width="1"/>
<line x1="1032.0" y1="167.91999999999993" x2="1036.5" y2="167.91999999999993" stroke="#d4d4d4" stroke-width="1.6"/>
<text x="1031.5" y="172.7" font-size="12.5" fill="#dcdcdc" text-anchor="end" stroke="#dcdcdc" stroke-width="0.3">2.4</text>
<polyline points="1036.5,407.1 1041.1,333.8 1044.0,322.9 1046.5,313.5 1048.9,304.9 1051.4,296.0 1053.9,288.1 1056.4,280.9 1058.9,274.8 1061.4,270.3 1066.4,262.9 1071.3,256.3 1076.3,250.6 1081.3,245.5 1086.3,241.3 1091.3,237.6 1096.2,234.6 1106.2,229.9 1116.1,226.0 1126.1,222.2 1136.1,218.7 1151.0,214.9 1165.9,211.8 1185.8,208.4 1210.7,205.2 1235.6,202.5 1260.5,200.3 1285.4,198.4 1335.2,195.2 1385.0,192.9 1434.7,191.1 1484.5,189.7 1534.3,188.8" fill="none" stroke="#ffff00" stroke-width="2.4" stroke-linejoin="round"/>
<polyline points="1036.5,409.5 1086.3,201.5 1136.1,200.0 1185.8,206.8 1235.6,201.4 1285.4,200.7 1335.2,203.0 1385.0,198.0 1434.7,195.8 1484.5,188.4 1534.3,187.9" fill="none" stroke="#808080" stroke-width="2.4" stroke-linejoin="round"/>
<rect x="1036.5" y="152.5" width="497.79999999999995" height="292.0" fill="none" stroke="#a8a8a8" stroke-width="1"/>
<line x1="1036.5" y1="444.5" x2="1036.5" y2="450.0" stroke="#d4d4d4" stroke-width="1.7"/>
<text x="1036.5" y="464.2" font-size="12.8" fill="#dcdcdc" text-anchor="middle" stroke="#dcdcdc" stroke-width="0.3">0</text>
<line x1="1086.28" y1="444.5" x2="1086.28" y2="450.0" stroke="#d4d4d4" stroke-width="1.7"/>
<text x="1086.3" y="464.2" font-size="12.8" fill="#dcdcdc" text-anchor="middle" stroke="#dcdcdc" stroke-width="0.3">10</text>
<line x1="1136.06" y1="444.5" x2="1136.06" y2="450.0" stroke="#d4d4d4" stroke-width="1.7"/>
<text x="1136.1" y="464.2" font-size="12.8" fill="#dcdcdc" text-anchor="middle" stroke="#dcdcdc" stroke-width="0.3">20</text>
<line x1="1185.84" y1="444.5" x2="1185.84" y2="450.0" stroke="#d4d4d4" stroke-width="1.7"/>
<text x="1185.8" y="464.2" font-size="12.8" fill="#dcdcdc" text-anchor="middle" stroke="#dcdcdc" stroke-width="0.3">30</text>
<line x1="1235.62" y1="444.5" x2="1235.62" y2="450.0" stroke="#d4d4d4" stroke-width="1.7"/>
<text x="1235.6" y="464.2" font-size="12.8" fill="#dcdcdc" text-anchor="middle" stroke="#dcdcdc" stroke-width="0.3">40</text>
<line x1="1285.4" y1="444.5" x2="1285.4" y2="450.0" stroke="#d4d4d4" stroke-width="1.7"/>
<text x="1285.4" y="464.2" font-size="12.8" fill="#dcdcdc" text-anchor="middle" stroke="#dcdcdc" stroke-width="0.3">50</text>
<line x1="1335.18" y1="444.5" x2="1335.18" y2="450.0" stroke="#d4d4d4" stroke-width="1.7"/>
<text x="1335.2" y="464.2" font-size="12.8" fill="#dcdcdc" text-anchor="middle" stroke="#dcdcdc" stroke-width="0.3">60</text>
<line x1="1384.96" y1="444.5" x2="1384.96" y2="450.0" stroke="#d4d4d4" stroke-width="1.7"/>
<text x="1385.0" y="464.2" font-size="12.8" fill="#dcdcdc" text-anchor="middle" stroke="#dcdcdc" stroke-width="0.3">70</text>
<line x1="1434.74" y1="444.5" x2="1434.74" y2="450.0" stroke="#d4d4d4" stroke-width="1.7"/>
<text x="1434.7" y="464.2" font-size="12.8" fill="#dcdcdc" text-anchor="middle" stroke="#dcdcdc" stroke-width="0.3">80</text>
<line x1="1484.52" y1="444.5" x2="1484.52" y2="450.0" stroke="#d4d4d4" stroke-width="1.7"/>
<text x="1484.5" y="464.2" font-size="12.8" fill="#dcdcdc" text-anchor="middle" stroke="#dcdcdc" stroke-width="0.3">90</text>
<line x1="1534.3" y1="444.5" x2="1534.3" y2="450.0" stroke="#d4d4d4" stroke-width="1.7"/>
<text x="1534.3" y="464.2" font-size="12.8" fill="#dcdcdc" text-anchor="middle" stroke="#dcdcdc" stroke-width="0.3">100</text>
<rect x="256.5" y="512.5" width="93.6" height="31" fill="#020305" stroke="#ffffff" stroke-width="1"/>
<rect x="256.5" y="553.5" width="93.6" height="31" fill="#020202" stroke="#ffffff" stroke-width="1"/>
<text x="303.5" y="597.0" font-size="11" fill="#ffffff" text-anchor="middle" font-weight="bold" style="font-family:Liberation Sans, sans-serif">0</text>
<rect x="366.5" y="512.5" width="93.6" height="31" fill="#131416" stroke="#ffffff" stroke-width="1"/>
<rect x="366.5" y="553.5" width="93.6" height="31" fill="#1c1c1c" stroke="#ffffff" stroke-width="1"/>
<text x="413.5" y="597.0" font-size="11" fill="#ffffff" text-anchor="middle" font-weight="bold" style="font-family:Liberation Sans, sans-serif">10</text>
<rect x="476.5" y="512.5" width="93.6" height="31" fill="#303030" stroke="#ffffff" stroke-width="1"/>
<rect x="476.5" y="553.5" width="93.6" height="31" fill="#343434" stroke="#ffffff" stroke-width="1"/>
<text x="523.5" y="597.0" font-size="11" fill="#ffffff" text-anchor="middle" font-weight="bold" style="font-family:Liberation Sans, sans-serif">20</text>
<rect x="586.5" y="512.5" width="93.6" height="31" fill="#494c4b" stroke="#ffffff" stroke-width="1"/>
<rect x="586.5" y="553.5" width="93.6" height="31" fill="#4d4d4d" stroke="#ffffff" stroke-width="1"/>
<text x="634.5" y="597.0" font-size="11" fill="#ffffff" text-anchor="middle" font-weight="bold" style="font-family:Liberation Sans, sans-serif">30</text>
<rect x="696.5" y="512.5" width="93.6" height="31" fill="#666766" stroke="#ffffff" stroke-width="1"/>
<rect x="696.5" y="553.5" width="93.6" height="31" fill="#666666" stroke="#ffffff" stroke-width="1"/>
<text x="744.5" y="597.0" font-size="11" fill="#ffffff" text-anchor="middle" font-weight="bold" style="font-family:Liberation Sans, sans-serif">40</text>
<rect x="807.5" y="512.5" width="93.6" height="31" fill="#838584" stroke="#ffffff" stroke-width="1"/>
<rect x="807.5" y="553.5" width="93.6" height="31" fill="#808080" stroke="#ffffff" stroke-width="1"/>
<text x="854.5" y="597.0" font-size="11" fill="#ffffff" text-anchor="middle" font-weight="bold" style="font-family:Liberation Sans, sans-serif">50</text>
<rect x="917.5" y="512.5" width="93.6" height="31" fill="#979a9a" stroke="#ffffff" stroke-width="1"/>
<rect x="917.5" y="553.5" width="93.6" height="31" fill="#999999" stroke="#ffffff" stroke-width="1"/>
<text x="964.5" y="597.0" font-size="11" fill="#ffffff" text-anchor="middle" font-weight="bold" style="font-family:Liberation Sans, sans-serif">60</text>
<rect x="1027.5" y="512.5" width="93.6" height="31" fill="#b3b3b3" stroke="#ffffff" stroke-width="1"/>
<rect x="1027.5" y="553.5" width="93.6" height="31" fill="#b3b3b3" stroke="#ffffff" stroke-width="1"/>
<text x="1074.5" y="597.0" font-size="11" fill="#ffffff" text-anchor="middle" font-weight="bold" style="font-family:Liberation Sans, sans-serif">70</text>
<rect x="1137.5" y="512.5" width="93.6" height="31" fill="#cdcfce" stroke="#ffffff" stroke-width="1"/>
<rect x="1137.5" y="553.5" width="93.6" height="31" fill="#cccccc" stroke="#ffffff" stroke-width="1"/>
<text x="1185.5" y="597.0" font-size="11" fill="#ffffff" text-anchor="middle" font-weight="bold" style="font-family:Liberation Sans, sans-serif">80</text>
<rect x="1248.5" y="512.5" width="93.6" height="31" fill="#e5e6e7" stroke="#ffffff" stroke-width="1"/>
<rect x="1248.5" y="553.5" width="93.6" height="31" fill="#e6e6e6" stroke="#ffffff" stroke-width="1"/>
<text x="1295.5" y="597.0" font-size="11" fill="#ffffff" text-anchor="middle" font-weight="bold" style="font-family:Liberation Sans, sans-serif">90</text>
<rect x="1358.5" y="512.5" width="93.6" height="31" fill="#fbfefd" stroke="#ffffff" stroke-width="1"/>
<rect x="1358.5" y="553.5" width="93.6" height="31" fill="#ffffff" stroke="#ffffff" stroke-width="1"/>
<text x="1405.5" y="597.0" font-size="11" fill="#ffffff" text-anchor="middle" font-weight="bold" style="font-family:Liberation Sans, sans-serif">100</text>
<text transform="translate(248.3,528) rotate(-90)" font-size="11" font-weight="bold" fill="#ffffff" text-anchor="middle" textLength="31" lengthAdjust="spacing" style="font-family:Liberation Sans, sans-serif">Actual</text>
<text transform="translate(248.3,569) rotate(-90)" font-size="11" font-weight="bold" fill="#ffffff" text-anchor="middle" textLength="30" lengthAdjust="spacing" style="font-family:Liberation Sans, sans-serif">Target</text>
<text x="13.5" y="643.8" font-size="23.5" fill="#ececec" textLength="212.0" lengthAdjust="spacing" stroke="#ececec" stroke-width="0.45">Current Reading</text>
<text x="13.5" y="681.7" font-size="21" fill="#ececec" textLength="100.5" lengthAdjust="spacing" stroke="#ececec" stroke-width="0.4">x: 0.3101</text>
<text x="13.5" y="717.6" font-size="21" fill="#ececec" textLength="101.0" lengthAdjust="spacing" stroke="#ececec" stroke-width="0.4">y: 0.3296</text>
<text x="14.0" y="753.2" font-size="21" fill="#ececec" textLength="108.0" lengthAdjust="spacing" stroke="#ececec" stroke-width="0.4">fL: 120.92</text>
<text x="13.5" y="788.9" font-size="21" fill="#ececec" textLength="168.0" lengthAdjust="spacing" stroke="#ececec" stroke-width="0.4">cd/m²: 414.302</text>
<path d="M386.6 776.3 Q 480 708 584.3 650.2" fill="none" stroke="#000000" stroke-width="2.6"/>
<rect x="356.5" y="625" width="227.79999999999995" height="151.29999999999995" fill="none" stroke="#9a9a9a" stroke-width="1"/>
<line x1="352.0" y1="637.6" x2="356.5" y2="637.6" stroke="#d4d4d4" stroke-width="1.6"/>
<text x="351.5" y="642.2" font-size="12.5" fill="#dcdcdc" text-anchor="end" stroke="#dcdcdc" stroke-width="0.3">0.35</text>
<line x1="352.0" y1="668.0500000000001" x2="356.5" y2="668.0500000000001" stroke="#d4d4d4" stroke-width="1.6"/>
<text x="351.5" y="672.7" font-size="12.5" fill="#dcdcdc" text-anchor="end" stroke="#dcdcdc" stroke-width="0.3">0.34</text>
<line x1="352.0" y1="698.5" x2="356.5" y2="698.5" stroke="#d4d4d4" stroke-width="1.6"/>
<text x="351.5" y="703.1" font-size="12.5" fill="#dcdcdc" text-anchor="end" stroke="#dcdcdc" stroke-width="0.3">0.33</text>
<line x1="352.0" y1="728.95" x2="356.5" y2="728.95" stroke="#d4d4d4" stroke-width="1.6"/>
<text x="351.5" y="733.6" font-size="12.5" fill="#dcdcdc" text-anchor="end" stroke="#dcdcdc" stroke-width="0.3">0.32</text>
<line x1="352.0" y1="759.4" x2="356.5" y2="759.4" stroke="#d4d4d4" stroke-width="1.6"/>
<text x="351.5" y="764.0" font-size="12.5" fill="#dcdcdc" text-anchor="end" stroke="#dcdcdc" stroke-width="0.3">0.31</text>
<line x1="365.9" y1="776.3" x2="365.9" y2="781.8" stroke="#d4d4d4" stroke-width="1.7"/>
<text x="365.9" y="795.5" font-size="12.5" fill="#dcdcdc" text-anchor="middle" stroke="#dcdcdc" stroke-width="0.3">0.29</text>
<line x1="411.59999999999997" y1="776.3" x2="411.59999999999997" y2="781.8" stroke="#d4d4d4" stroke-width="1.7"/>
<text x="411.6" y="795.5" font-size="12.5" fill="#dcdcdc" text-anchor="middle" stroke="#dcdcdc" stroke-width="0.3">0.3</text>
<line x1="457.29999999999995" y1="776.3" x2="457.29999999999995" y2="781.8" stroke="#d4d4d4" stroke-width="1.7"/>
<text x="457.3" y="795.5" font-size="12.5" fill="#dcdcdc" text-anchor="middle" stroke="#dcdcdc" stroke-width="0.3">0.31</text>
<line x1="503.0" y1="776.3" x2="503.0" y2="781.8" stroke="#d4d4d4" stroke-width="1.7"/>
<text x="503.0" y="795.5" font-size="12.5" fill="#dcdcdc" text-anchor="middle" stroke="#dcdcdc" stroke-width="0.3">0.32</text>
<line x1="548.7" y1="776.3" x2="548.7" y2="781.8" stroke="#d4d4d4" stroke-width="1.7"/>
<text x="548.7" y="795.5" font-size="12.5" fill="#dcdcdc" text-anchor="middle" stroke="#dcdcdc" stroke-width="0.3">0.33</text>
<circle cx="410.7" cy="729.8" r="4.6" fill="#1c1c1c" stroke="#1a1a1a" stroke-width="0.8"/>
<circle cx="457.9" cy="680.8" r="4.6" fill="#484848" stroke="#1a1a1a" stroke-width="0.8"/>
<circle cx="475.8" cy="690.5" r="4.6" fill="#333333" stroke="#1a1a1a" stroke-width="0.8"/>
<rect x="463" y="693.8" width="13.8" height="12.6" fill="#ffffff" stroke="#000000" stroke-width="1.6"/>
<circle cx="456.5" cy="696.5" r="4.6" fill="#707070" stroke="#1a1a1a" stroke-width="0.8"/>
<circle cx="464.0" cy="695.0" r="4.6" fill="#8a8a8a" stroke="#1a1a1a" stroke-width="0.8"/>
<circle cx="467.5" cy="697.0" r="4.6" fill="#a0a0a0" stroke="#1a1a1a" stroke-width="0.8"/>
<circle cx="470.0" cy="698.5" r="4.6" fill="#b4b4b4" stroke="#1a1a1a" stroke-width="0.8"/>
<circle cx="468.5" cy="700.5" r="4.6" fill="#c8c8c8" stroke="#1a1a1a" stroke-width="0.8"/>
<circle cx="466.5" cy="701.5" r="4.6" fill="#dedede" stroke="#1a1a1a" stroke-width="0.8"/>
<circle cx="458.0" cy="698.8" r="4.6" fill="#ffffff" stroke="#1a1a1a" stroke-width="0.8"/>
<defs><clipPath id="tclip"><rect x="596" y="617" width="980" height="175.5"/></clipPath></defs>
<g clip-path="url(#tclip)">
<text x="738.0" y="634.8" font-size="13.5" fill="#f2f2f2" stroke="#f2f2f2" stroke-width="0.3">0</text>
<text x="826.5" y="634.8" font-size="13.5" fill="#f2f2f2" stroke="#f2f2f2" stroke-width="0.3">10</text>
<text x="906.5" y="634.8" font-size="13.5" fill="#f2f2f2" stroke="#f2f2f2" stroke-width="0.3">20</text>
<text x="986.5" y="634.8" font-size="13.5" fill="#f2f2f2" stroke="#f2f2f2" stroke-width="0.3">30</text>
<text x="1066.5" y="634.8" font-size="13.5" fill="#f2f2f2" stroke="#f2f2f2" stroke-width="0.3">40</text>
<text x="1146.5" y="634.8" font-size="13.5" fill="#f2f2f2" stroke="#f2f2f2" stroke-width="0.3">50</text>
<text x="1226.5" y="634.8" font-size="13.5" fill="#f2f2f2" stroke="#f2f2f2" stroke-width="0.3">60</text>
<text x="1306.5" y="634.8" font-size="13.5" fill="#f2f2f2" stroke="#f2f2f2" stroke-width="0.3">70</text>
<text x="1386.5" y="634.8" font-size="13.5" fill="#f2f2f2" stroke="#f2f2f2" stroke-width="0.3">80</text>
<text x="1466.5" y="634.8" font-size="13.5" fill="#f2f2f2" stroke="#f2f2f2" stroke-width="0.3">90</text>
<text x="1546.5" y="634.8" font-size="13.5" fill="#f2f2f2" stroke="#f2f2f2" stroke-width="0.3">100</text>
<text x="612.3" y="659.0" font-size="14" fill="#f2f2f2" textLength="53.0" lengthAdjust="spacing" stroke="#f2f2f2" stroke-width="0.3">x: CIE31</text>
<text x="738.0" y="659.0" font-size="14" fill="#f2f2f2" textLength="46.2" lengthAdjust="spacing" stroke="#f2f2f2" stroke-width="0.3">0.2412</text>
<text x="826.5" y="659.0" font-size="14" fill="#f2f2f2" textLength="46.2" lengthAdjust="spacing" stroke="#f2f2f2" stroke-width="0.3">0.2998</text>
<text x="906.5" y="659.0" font-size="14" fill="#f2f2f2" textLength="46.2" lengthAdjust="spacing" stroke="#f2f2f2" stroke-width="0.3">0.3142</text>
<text x="986.5" y="659.0" font-size="14" fill="#f2f2f2" textLength="46.2" lengthAdjust="spacing" stroke="#f2f2f2" stroke-width="0.3">0.3100</text>
<text x="1066.5" y="659.0" font-size="14" fill="#f2f2f2" textLength="46.2" lengthAdjust="spacing" stroke="#f2f2f2" stroke-width="0.3">0.3096</text>
<text x="1146.5" y="659.0" font-size="14" fill="#f2f2f2" textLength="46.2" lengthAdjust="spacing" stroke="#f2f2f2" stroke-width="0.3">0.3113</text>
<text x="1226.5" y="659.0" font-size="14" fill="#f2f2f2" textLength="46.2" lengthAdjust="spacing" stroke="#f2f2f2" stroke-width="0.3">0.3104</text>
<text x="1306.5" y="659.0" font-size="14" fill="#f2f2f2" textLength="46.2" lengthAdjust="spacing" stroke="#f2f2f2" stroke-width="0.3">0.3123</text>
<text x="1386.5" y="659.0" font-size="14" fill="#f2f2f2" textLength="46.2" lengthAdjust="spacing" stroke="#f2f2f2" stroke-width="0.3">0.3125</text>
<text x="1466.5" y="659.0" font-size="14" fill="#f2f2f2" textLength="46.2" lengthAdjust="spacing" stroke="#f2f2f2" stroke-width="0.3">0.3118</text>
<text x="1546.5" y="659.0" font-size="14" fill="#f2f2f2" textLength="46.2" lengthAdjust="spacing" stroke="#f2f2f2" stroke-width="0.3">0.3127</text>
<text x="612.3" y="681.8" font-size="14" fill="#f2f2f2" textLength="53.0" lengthAdjust="spacing" stroke="#f2f2f2" stroke-width="0.3">y: CIE31</text>
<text x="738.0" y="681.8" font-size="14" fill="#f2f2f2" textLength="46.2" lengthAdjust="spacing" stroke="#f2f2f2" stroke-width="0.3">0.2455</text>
<text x="826.5" y="681.8" font-size="14" fill="#f2f2f2" textLength="46.2" lengthAdjust="spacing" stroke="#f2f2f2" stroke-width="0.3">0.3192</text>
<text x="906.5" y="681.8" font-size="14" fill="#f2f2f2" textLength="46.2" lengthAdjust="spacing" stroke="#f2f2f2" stroke-width="0.3">0.3322</text>
<text x="986.5" y="681.8" font-size="14" fill="#f2f2f2" textLength="46.2" lengthAdjust="spacing" stroke="#f2f2f2" stroke-width="0.3">0.3356</text>
<text x="1066.5" y="681.8" font-size="14" fill="#f2f2f2" textLength="46.2" lengthAdjust="spacing" stroke="#f2f2f2" stroke-width="0.3">0.3303</text>
<text x="1146.5" y="681.8" font-size="14" fill="#f2f2f2" textLength="46.2" lengthAdjust="spacing" stroke="#f2f2f2" stroke-width="0.3">0.3306</text>
<text x="1226.5" y="681.8" font-size="14" fill="#f2f2f2" textLength="46.2" lengthAdjust="spacing" stroke="#f2f2f2" stroke-width="0.3">0.3301</text>
<text x="1306.5" y="681.8" font-size="14" fill="#f2f2f2" textLength="46.2" lengthAdjust="spacing" stroke="#f2f2f2" stroke-width="0.3">0.3284</text>
<text x="1386.5" y="681.8" font-size="14" fill="#f2f2f2" textLength="46.2" lengthAdjust="spacing" stroke="#f2f2f2" stroke-width="0.3">0.3290</text>
<text x="1466.5" y="681.8" font-size="14" fill="#f2f2f2" textLength="46.2" lengthAdjust="spacing" stroke="#f2f2f2" stroke-width="0.3">0.3285</text>
<text x="1546.5" y="681.8" font-size="14" fill="#f2f2f2" textLength="46.2" lengthAdjust="spacing" stroke="#f2f2f2" stroke-width="0.3">0.3296</text>
<text x="612.3" y="704.6" font-size="14" fill="#f2f2f2" stroke="#f2f2f2" stroke-width="0.3">Y</text>
<text x="738.0" y="704.6" font-size="14" fill="#f2f2f2" textLength="46.2" lengthAdjust="spacing" stroke="#f2f2f2" stroke-width="0.3">0.2725</text>
<text x="826.5" y="704.6" font-size="14" fill="#f2f2f2" textLength="46.2" lengthAdjust="spacing" stroke="#f2f2f2" stroke-width="0.3">2.7751</text>
<text x="906.5" y="704.6" font-size="14" fill="#f2f2f2" textLength="54.6" lengthAdjust="spacing" stroke="#f2f2f2" stroke-width="0.3">11.9432</text>
<text x="986.5" y="704.6" font-size="14" fill="#f2f2f2" textLength="54.6" lengthAdjust="spacing" stroke="#f2f2f2" stroke-width="0.3">30.0408</text>
<text x="1066.5" y="704.6" font-size="14" fill="#f2f2f2" textLength="54.6" lengthAdjust="spacing" stroke="#f2f2f2" stroke-width="0.3">55.2753</text>
<text x="1146.5" y="704.6" font-size="14" fill="#f2f2f2" textLength="54.6" lengthAdjust="spacing" stroke="#f2f2f2" stroke-width="0.3">90.7387</text>
<text x="1226.5" y="704.6" font-size="14" fill="#f2f2f2" textLength="63.0" lengthAdjust="spacing" stroke="#f2f2f2" stroke-width="0.3">135.3865</text>
<text x="1306.5" y="704.6" font-size="14" fill="#f2f2f2" textLength="63.0" lengthAdjust="spacing" stroke="#f2f2f2" stroke-width="0.3">186.5622</text>
<text x="1386.5" y="704.6" font-size="14" fill="#f2f2f2" textLength="63.0" lengthAdjust="spacing" stroke="#f2f2f2" stroke-width="0.3">251.7428</text>
<text x="1466.5" y="704.6" font-size="14" fill="#f2f2f2" textLength="63.0" lengthAdjust="spacing" stroke="#f2f2f2" stroke-width="0.3">327.6882</text>
<text x="1546.5" y="704.6" font-size="14" fill="#f2f2f2" textLength="63.0" lengthAdjust="spacing" stroke="#f2f2f2" stroke-width="0.3">414.3020</text>
<text x="612.3" y="727.4" font-size="14" fill="#f2f2f2" textLength="55.5" lengthAdjust="spacing" stroke="#f2f2f2" stroke-width="0.3">Target Y</text>
<text x="738.0" y="727.4" font-size="14" fill="#f2f2f2" textLength="46.2" lengthAdjust="spacing" stroke="#f2f2f2" stroke-width="0.3">0.2725</text>
<text x="826.5" y="727.4" font-size="14" fill="#f2f2f2" textLength="46.2" lengthAdjust="spacing" stroke="#f2f2f2" stroke-width="0.3">4.5493</text>
<text x="906.5" y="727.4" font-size="14" fill="#f2f2f2" textLength="54.6" lengthAdjust="spacing" stroke="#f2f2f2" stroke-width="0.3">13.9788</text>
<text x="986.5" y="727.4" font-size="14" fill="#f2f2f2" textLength="54.6" lengthAdjust="spacing" stroke="#f2f2f2" stroke-width="0.3">30.1952</text>
<text x="1066.5" y="727.4" font-size="14" fill="#f2f2f2" textLength="54.6" lengthAdjust="spacing" stroke="#f2f2f2" stroke-width="0.3">55.2839</text>
<text x="1146.5" y="727.4" font-size="14" fill="#f2f2f2" textLength="54.6" lengthAdjust="spacing" stroke="#f2f2f2" stroke-width="0.3">89.6451</text>
<text x="1226.5" y="727.4" font-size="14" fill="#f2f2f2" textLength="63.0" lengthAdjust="spacing" stroke="#f2f2f2" stroke-width="0.3">132.1603</text>
<text x="1306.5" y="727.4" font-size="14" fill="#f2f2f2" textLength="63.0" lengthAdjust="spacing" stroke="#f2f2f2" stroke-width="0.3">184.5989</text>
<text x="1386.5" y="727.4" font-size="14" fill="#f2f2f2" textLength="63.0" lengthAdjust="spacing" stroke="#f2f2f2" stroke-width="0.3">250.2749</text>
<text x="1466.5" y="727.4" font-size="14" fill="#f2f2f2" textLength="63.0" lengthAdjust="spacing" stroke="#f2f2f2" stroke-width="0.3">327.8932</text>
<text x="1546.5" y="727.4" font-size="14" fill="#f2f2f2" textLength="63.0" lengthAdjust="spacing" stroke="#f2f2f2" stroke-width="0.3">414.3020</text>
<text x="612.3" y="750.2" font-size="14" fill="#f2f2f2" textLength="115.5" lengthAdjust="spacing" stroke="#f2f2f2" stroke-width="0.3">Gamma Log/Log</text>
<text x="738.0" y="750.2" font-size="14" fill="#f2f2f2" textLength="46.2" lengthAdjust="spacing" stroke="#f2f2f2" stroke-width="0.3">1.0446</text>
<text x="826.5" y="750.2" font-size="14" fill="#f2f2f2" textLength="46.2" lengthAdjust="spacing" stroke="#f2f2f2" stroke-width="0.3">2.1925</text>
<text x="906.5" y="750.2" font-size="14" fill="#f2f2f2" textLength="46.2" lengthAdjust="spacing" stroke="#f2f2f2" stroke-width="0.3">2.2035</text>
<text x="986.5" y="750.2" font-size="14" fill="#f2f2f2" textLength="46.2" lengthAdjust="spacing" stroke="#f2f2f2" stroke-width="0.3">2.1677</text>
<text x="1066.5" y="750.2" font-size="14" fill="#f2f2f2" textLength="46.2" lengthAdjust="spacing" stroke="#f2f2f2" stroke-width="0.3">2.1983</text>
<text x="1146.5" y="750.2" font-size="14" fill="#f2f2f2" textLength="46.2" lengthAdjust="spacing" stroke="#f2f2f2" stroke-width="0.3">2.2033</text>
<text x="1226.5" y="750.2" font-size="14" fill="#f2f2f2" textLength="46.2" lengthAdjust="spacing" stroke="#f2f2f2" stroke-width="0.3">2.1895</text>
<text x="1306.5" y="750.2" font-size="14" fill="#f2f2f2" textLength="46.2" lengthAdjust="spacing" stroke="#f2f2f2" stroke-width="0.3">2.2194</text>
<text x="1386.5" y="750.2" font-size="14" fill="#f2f2f2" textLength="46.2" lengthAdjust="spacing" stroke="#f2f2f2" stroke-width="0.3">2.2326</text>
<text x="1466.5" y="750.2" font-size="14" fill="#f2f2f2" textLength="46.2" lengthAdjust="spacing" stroke="#f2f2f2" stroke-width="0.3">2.2730</text>
<text x="1546.5" y="750.2" font-size="14" fill="#f2f2f2" textLength="46.2" lengthAdjust="spacing" stroke="#f2f2f2" stroke-width="0.3">2.2790</text>
<text x="612.3" y="773.0" font-size="14" fill="#f2f2f2" textLength="27.5" lengthAdjust="spacing" stroke="#f2f2f2" stroke-width="0.3">CCT</text>
<text x="738.0" y="773.0" font-size="14" fill="#f2f2f2" textLength="79.9" lengthAdjust="spacing" stroke="#f2f2f2" stroke-width="0.3">25791.0000</text>
<text x="826.5" y="773.0" font-size="14" fill="#f2f2f2" textLength="71.5" lengthAdjust="spacing" stroke="#f2f2f2" stroke-width="0.3">7384.0000</text>
<text x="906.5" y="773.0" font-size="14" fill="#f2f2f2" textLength="71.5" lengthAdjust="spacing" stroke="#f2f2f2" stroke-width="0.3">6404.0000</text>
<text x="986.5" y="773.0" font-size="14" fill="#f2f2f2" textLength="71.5" lengthAdjust="spacing" stroke="#f2f2f2" stroke-width="0.3">6600.0000</text>
<text x="1066.5" y="773.0" font-size="14" fill="#f2f2f2" textLength="71.5" lengthAdjust="spacing" stroke="#f2f2f2" stroke-width="0.3">6663.0000</text>
<text x="1146.5" y="773.0" font-size="14" fill="#f2f2f2" textLength="71.5" lengthAdjust="spacing" stroke="#f2f2f2" stroke-width="0.3">6567.0000</text>
<text x="1226.5" y="773.0" font-size="14" fill="#f2f2f2" textLength="71.5" lengthAdjust="spacing" stroke="#f2f2f2" stroke-width="0.3">6623.0000</text>
<text x="1306.5" y="773.0" font-size="14" fill="#f2f2f2" textLength="71.5" lengthAdjust="spacing" stroke="#f2f2f2" stroke-width="0.3">6530.0000</text>
<text x="1386.5" y="773.0" font-size="14" fill="#f2f2f2" textLength="71.5" lengthAdjust="spacing" stroke="#f2f2f2" stroke-width="0.3">6517.0000</text>
<text x="1466.5" y="773.0" font-size="14" fill="#f2f2f2" textLength="71.5" lengthAdjust="spacing" stroke="#f2f2f2" stroke-width="0.3">6558.0000</text>
<text x="1546.5" y="773.0" font-size="14" fill="#f2f2f2" textLength="71.5" lengthAdjust="spacing" stroke="#f2f2f2" stroke-width="0.3">6642.0000</text>
<text x="612.3" y="795.8" font-size="14" fill="#f2f2f2" textLength="56.0" lengthAdjust="spacing" stroke="#f2f2f2" stroke-width="0.3">ΔE 2000</text>
<text x="738.0" y="795.8" font-size="14" fill="#f2f2f2" textLength="46.2" lengthAdjust="spacing" stroke="#f2f2f2" stroke-width="0.3">0.9316</text>
<text x="826.5" y="795.8" font-size="14" fill="#f2f2f2" textLength="46.2" lengthAdjust="spacing" stroke="#f2f2f2" stroke-width="0.3">2.5345</text>
<text x="906.5" y="795.8" font-size="14" fill="#f2f2f2" textLength="46.2" lengthAdjust="spacing" stroke="#f2f2f2" stroke-width="0.3">1.4615</text>
<text x="986.5" y="795.8" font-size="14" fill="#f2f2f2" textLength="46.2" lengthAdjust="spacing" stroke="#f2f2f2" stroke-width="0.3">2.8831</text>
<text x="1066.5" y="795.8" font-size="14" fill="#f2f2f2" textLength="46.2" lengthAdjust="spacing" stroke="#f2f2f2" stroke-width="0.3">1.7082</text>
<text x="1146.5" y="795.8" font-size="14" fill="#f2f2f2" textLength="46.2" lengthAdjust="spacing" stroke="#f2f2f2" stroke-width="0.3">1.3934</text>
<text x="1226.5" y="795.8" font-size="14" fill="#f2f2f2" textLength="46.2" lengthAdjust="spacing" stroke="#f2f2f2" stroke-width="0.3">1.8782</text>
<text x="1306.5" y="795.8" font-size="14" fill="#f2f2f2" textLength="46.2" lengthAdjust="spacing" stroke="#f2f2f2" stroke-width="0.3">0.3354</text>
<text x="1386.5" y="795.8" font-size="14" fill="#f2f2f2" textLength="46.2" lengthAdjust="spacing" stroke="#f2f2f2" stroke-width="0.3">0.2300</text>
<text x="1466.5" y="795.8" font-size="14" fill="#f2f2f2" textLength="46.2" lengthAdjust="spacing" stroke="#f2f2f2" stroke-width="0.3">0.4554</text>
<text x="1546.5" y="795.8" font-size="14" fill="#f2f2f2" textLength="46.2" lengthAdjust="spacing" stroke="#f2f2f2" stroke-width="0.3">2.3900</text>
</g>
<path d="M1580 652l4-5 4 5z" fill="#303030"/><path d="M1580 782l4 5 4-5z" fill="#303030"/>
<path d="M620 795.5l-5 4 5 4z" fill="#303030"/><path d="M1565.5 795.5l5 4-5 4z" fill="#303030"/>
<text x="58.0" y="864.0" font-size="11" fill="#2e2e2e" text-anchor="middle" font-weight="bold" style="font-family:Liberation Sans, sans-serif">0</text>
<text x="174.0" y="864.0" font-size="11" fill="#2e2e2e" text-anchor="middle" font-weight="bold" style="font-family:Liberation Sans, sans-serif">10</text>
<text x="290.0" y="864.0" font-size="11" fill="#2e2e2e" text-anchor="middle" font-weight="bold" style="font-family:Liberation Sans, sans-serif">20</text>
<text x="406.0" y="864.0" font-size="11" fill="#2e2e2e" text-anchor="middle" font-weight="bold" style="font-family:Liberation Sans, sans-serif">30</text>
<text x="522.0" y="864.0" font-size="11" fill="#2e2e2e" text-anchor="middle" font-weight="bold" style="font-family:Liberation Sans, sans-serif">40</text>
<text x="638.0" y="864.0" font-size="11" fill="#2e2e2e" text-anchor="middle" font-weight="bold" style="font-family:Liberation Sans, sans-serif">50</text>
<text x="754.0" y="864.0" font-size="11" fill="#2e2e2e" text-anchor="middle" font-weight="bold" style="font-family:Liberation Sans, sans-serif">60</text>
<text x="870.0" y="864.0" font-size="11" fill="#2e2e2e" text-anchor="middle" font-weight="bold" style="font-family:Liberation Sans, sans-serif">70</text>
<text x="985.0" y="864.0" font-size="11" fill="#2e2e2e" text-anchor="middle" font-weight="bold" style="font-family:Liberation Sans, sans-serif">80</text>
<text x="1101.0" y="864.0" font-size="11" fill="#2e2e2e" text-anchor="middle" font-weight="bold" style="font-family:Liberation Sans, sans-serif">90</text>
<text x="1217.0" y="864.0" font-size="11" fill="#ffffff" text-anchor="middle" font-weight="bold" style="font-family:Liberation Sans, sans-serif">100</text>
<defs><linearGradient id="bcirc" x1="0" y1="0" x2="0" y2="1"><stop offset="0" stop-color="#6a6a6a"/><stop offset="1" stop-color="#a2a2a2"/></linearGradient></defs>
<circle cx="1301.5" cy="817" r="7.2" fill="url(#bcirc)"/><path d="M1297.5 819l4-4.5 4 4.5z" fill="#3a3a3a"/>
<rect x="1286" y="833.2" width="29.5" height="29.5" fill="#8e8e8e" stroke="#2a2a2a" stroke-width="2.2" rx="3.5"/>
<rect x="1294" y="841" width="14" height="14" fill="#000000"/>
<rect x="1294" y="841" width="14" height="7" fill="#1e1e1e"/>
<circle cx="1349.0" cy="823.1" r="9.8" fill="url(#bcirc)"/>
<circle cx="1395.0" cy="823.1" r="9.8" fill="url(#bcirc)"/>
<circle cx="1439.7" cy="823.1" r="9.8" fill="url(#bcirc)"/>
<circle cx="1485.0" cy="823.1" r="9.8" fill="url(#bcirc)"/>
<circle cx="1530.0" cy="823.1" r="9.8" fill="url(#bcirc)"/>
<circle cx="1576.0" cy="823.1" r="9.8" fill="#2b2b2b"/>
<rect x="1345" y="819" width="8" height="8.2" fill="#2e2e2e"/>
<path d="M1391.8 818.6v10.2l8.6-5.1z" fill="#2e2e2e"/>
<path d="M1436.9 818.9h-2.4v9.4h2.4M1442.5 818.9h2.4v9.4h-2.4" fill="none" stroke="#2e2e2e" stroke-width="1.7"/>
<rect x="1437.6000000000001" y="822.7" width="1.6" height="1.7" fill="#2e2e2e"/>
<rect x="1440.2" y="822.7" width="1.6" height="1.7" fill="#2e2e2e"/>
<path d="M1485 823.1c-1.6 -2.6 -6.6 -3.4 -6.6 0s5 2.6 6.6 0s6.6 -3.4 6.6 0s-5 2.6 -6.6 0z" fill="none" stroke="#2e2e2e" stroke-width="1.5"/>
<path d="M1525.1 822.9a5 5 0 0 1 8.6-2.9" fill="none" stroke="#2e2e2e" stroke-width="1.9"/><path d="M1534.9 824.1a5 5 0 0 1-8.6 2.9" fill="none" stroke="#2e2e2e" stroke-width="1.9"/>
<path d="M1535.6 817.2v5.2h-5.2z" fill="#2e2e2e"/><path d="M1524.4 829.8v-5.2h5.2z" fill="#2e2e2e"/>
<path d="M1571 822.2l3.6 4.6 6.2-7.6" fill="none" stroke="#151515" stroke-width="2.8"/>
<circle cx="1357" cy="854" r="10" fill="url(#bcirc)"/><circle cx="1569.5" cy="854" r="10" fill="url(#bcirc)"/>
<path d="M1356 849.5l-4 4.5 4 4.5M1361 849.5l-4 4.5 4 4.5" fill="none" stroke="#2e2e2e" stroke-width="1.5"/>
<path d="M1565.5 849.5l4 4.5-4 4.5M1570.5 849.5l4 4.5-4 4.5" fill="none" stroke="#2e2e2e" stroke-width="1.5"/>
<text x="1382.0" y="862.0" font-size="21.5" fill="#303030" textLength="52.0" lengthAdjust="spacing" stroke="#303030" stroke-width="0.5">Back</text>
<text x="1489.0" y="862.0" font-size="21.5" fill="#303030" textLength="53.0" lengthAdjust="spacing" stroke="#303030" stroke-width="0.5">Next</text>
</svg>
</body></html>
